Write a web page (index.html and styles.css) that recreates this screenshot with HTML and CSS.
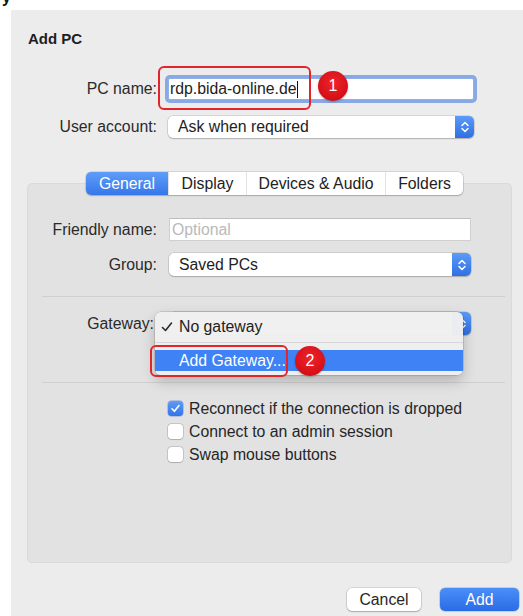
FILE: index.html
```html
<!DOCTYPE html>
<html lang="en">
<head>
<meta charset="utf-8">
<title>Add PC</title>
<link rel="stylesheet" href="styles.css">
</head>
<body>
<div class="page">
  <div class="cut"><span>y</span></div>

  <div class="dialog">
    <h1 class="title">Add PC</h1>

    <div class="form top-form">
      <span class="lbl">PC name:</span>
      <div class="field focus"><span class="val">rdp.bida-online.de</span><i class="caret"></i></div>
      <span class="lbl">User account:</span>
      <div class="popup">
        <span class="val">Ask when required</span>
        <span class="stepper"><svg width="10" height="14" viewBox="0 0 10 14"><path d="M2 5.5 5 2.5 8 5.5M2 8.5 5 11.5 8 8.5" fill="none" stroke="#fff" stroke-width="1.5" stroke-linecap="round" stroke-linejoin="round"/></svg></span>
      </div>
    </div>

    <div class="tabs">
      <span class="tab active t-general">General</span>
      <span class="tab t-display">Display</span>
      <span class="tab t-devices">Devices &amp; Audio</span>
      <span class="tab t-folders">Folders</span>
    </div>

    <div class="panel">
      <div class="form panel-form">
        <span class="lbl">Friendly name:</span>
        <div class="field"><span class="val placeholder">Optional</span></div>
        <span class="lbl">Group:</span>
        <div class="popup">
          <span class="val">Saved PCs</span>
          <span class="stepper"><svg width="10" height="14" viewBox="0 0 10 14"><path d="M2 5.5 5 2.5 8 5.5M2 8.5 5 11.5 8 8.5" fill="none" stroke="#fff" stroke-width="1.5" stroke-linecap="round" stroke-linejoin="round"/></svg></span>
        </div>
      </div>

      <div class="sep sep-a"></div>

      <div class="form panel-form gw-form">
        <span class="lbl">Gateway:</span>
        <div class="popup gw-popup">
          <span class="val"></span>
          <span class="stepper"><svg width="10" height="14" viewBox="0 0 10 14"><path d="M2 5.5 5 2.5 8 5.5M2 8.5 5 11.5 8 8.5" fill="none" stroke="#fff" stroke-width="1.5" stroke-linecap="round" stroke-linejoin="round"/></svg></span>

          <div class="menu">
            <div class="menu-item">
              <svg class="tick" width="12" height="12" viewBox="0 0 12 12"><path d="M1.5 6.5 4.5 9.5 10.5 2" fill="none" stroke="#2b2b2b" stroke-width="1.6" stroke-linecap="round" stroke-linejoin="round"/></svg>
              <span>No gateway</span>
            </div>
            <div class="menu-sep"></div>
            <div class="menu-item hl"><span>Add Gateway...</span></div>
          </div>
        </div>
      </div>

      <div class="sep sep-b"></div>

      <div class="checks">
        <label class="check"><span class="box on"><svg width="11" height="11" viewBox="0 0 11 11"><path d="M2 5.8 4.4 8.3 9 2.6" fill="none" stroke="#fff" stroke-width="1.6" stroke-linecap="round" stroke-linejoin="round"/></svg></span>Reconnect if the connection is dropped</label>
        <label class="check"><span class="box"></span>Connect to an admin session</label>
        <label class="check"><span class="box"></span>Swap mouse buttons</label>
      </div>
    </div>

    <div class="buttons">
      <span class="btn cancel">Cancel</span>
      <span class="btn add">Add</span>
    </div>
  </div>

  <div class="mark mark-1"></div>
  <div class="badge badge-1">1</div>
  <div class="mark mark-2"></div>
  <div class="badge badge-2">2</div>
</div>
</body>
</html>
```

FILE: styles.css
```css
* { box-sizing: border-box; }

html, body {
  margin: 0;
  background: #ffffff;
}

body {
  font-family: "Liberation Sans", Arial, Helvetica, sans-serif;
  font-size: 15.8px;
  color: #262626;
}

.page {
  position: relative;
  width: 523px;
  height: 616px;
  overflow: hidden;
}

/* tail of the line above the sheet */
.cut {
  height: 10px;
  overflow: hidden;
  padding-left: 2px;
  display: flex;
  align-items: flex-end;
}
.cut span {
  display: inline-block;
  font-size: 16px;
  line-height: 16px;
  padding-bottom: 4px;
  color: #111;
  font-weight: bold;
}

.dialog {
  margin-left: 11px;
  height: 606px;
  background: #ececec;
  display: flex;
  flex-direction: column;
  padding-top: 20px;
}

.title {
  margin: 0 0 0 17px;
  font-size: 15px;
  line-height: 18px;
  font-weight: bold;
  color: #1e1e1e;
}

/* label / control grid */
.form {
  display: grid;
  align-items: center;
}
.top-form {
  margin-top: 30px;
  grid-template-columns: 146px 306px;
  column-gap: 11px;
  row-gap: 16px;
  grid-auto-rows: 22px;
}
.lbl {
  text-align: right;
  line-height: 22px;
  white-space: nowrap;
  color: #2a2a2a;
}

.field {
  height: 22px;
  background: #fff;
  border: 1px solid #cfcfcf;
  border-top-color: #bdbdbd;
  display: flex;
  align-items: center;
  padding-left: 2px;
  line-height: 20px;
}
.field.focus {
  border-color: #8fb0e8;
  box-shadow: 0 0 0 3px #88a9e3;
  border-radius: 2px;
  padding-left: 1px;
}
.val { white-space: nowrap; color: #222; }
.placeholder { color: #b9b9b9; }
.caret {
  display: inline-block;
  width: 1px;
  height: 17px;
  background: #111;
  margin-left: 1px;
}

.popup {
  height: 22px;
  background: #fff;
  border-radius: 5px;
  box-shadow: 0 0 0 0.5px rgba(0,0,0,0.18), 0 1px 1.5px rgba(0,0,0,0.18);
  display: flex;
  align-items: center;
  justify-content: space-between;
  padding-left: 10px;
  line-height: 22px;
}
.stepper {
  width: 19px;
  height: 100%;
  border-radius: 0 5px 5px 0;
  background: linear-gradient(#5b9bf8, #2f6fe3);
  display: flex;
  align-items: center;
  justify-content: center;
}

/* segmented tab control */
.tabs {
  position: relative;
  z-index: 1;
  margin: 34px 0 0 75px;
  width: 377px;
  height: 23px;
  display: flex;
  background: #fff;
  border-radius: 5px;
  box-shadow: 0 0 0 0.5px rgba(0,0,0,0.2), 0 1px 1.5px rgba(0,0,0,0.18);
  line-height: 23px;
}
.tab {
  text-align: center;
  color: #222;
  border-left: 1px solid #e2e2e2;
}
.tab:first-child { border-left: 0; }
.tab.active {
  background: linear-gradient(#5f9df8, #3577ea);
  color: #fff;
  border-radius: 5px 0 0 5px;
}
.t-general { width: 82px; }
.t-display { width: 78px; }
.t-devices { width: 139px; }
.t-folders { width: 78px; }

/* grouped box */
.panel {
  margin: -12px 11px 0 16px;
  height: 380px;
  background: #e2e2e2;
  border: 1px solid #dadada;
  border-radius: 5px;
  padding-top: 34px;
}
.panel-form {
  grid-template-columns: 129px 302px;
  column-gap: 12px;
  row-gap: 12px;
  grid-auto-rows: 23px;
}
.panel-form .field,
.panel-form .popup { height: 23px; }

.sep {
  height: 1px;
  background: #d0d0d0;
  margin: 0 6px 0 14px;
}
.sep-a { margin-top: 20px; }
.sep-b { margin-top: 47px; }
.gw-form { margin-top: 15px; }
.gw-form .lbl { margin-right: 3px; }

.gw-popup { position: relative; }

/* opened pop-up menu */
.menu {
  position: absolute;
  left: -14px;
  top: 0;
  width: 308px;
  height: 63px;
  background: rgba(240,240,240,0.97);
  border-radius: 6px;
  box-shadow: 0 0 0 0.5px rgba(0,0,0,0.22), 0 6px 14px rgba(0,0,0,0.22);
  padding-top: 3px;
}
.menu-item {
  height: 24px;
  line-height: 24px;
  padding-left: 24px;
  position: relative;
  color: #222;
}
.menu-item .tick {
  position: absolute;
  left: 6px;
  top: 6px;
}
.menu-sep {
  height: 1px;
  background: #d6d6d6;
  margin: 3px 0 7px;
}
.menu-item.hl {
  height: 21px;
  line-height: 21px;
  background: #3e82f5;
  color: #fff;
}

/* check boxes */
.checks {
  margin: 14px 0 0 140px;
  display: flex;
  flex-direction: column;
}
.check {
  height: 23px;
  line-height: 23px;
  display: flex;
  align-items: center;
  white-space: nowrap;
  color: #262626;
}
.box {
  width: 15px;
  height: 15px;
  border-radius: 3.5px;
  background: #fff;
  box-shadow: 0 0 0 0.5px rgba(0,0,0,0.25), 0 1px 1px rgba(0,0,0,0.12);
  margin-right: 6px;
  display: flex;
  align-items: center;
  justify-content: center;
}
.box.on {
  background: linear-gradient(#5e9cf8, #3274e6);
  box-shadow: 0 0 0 0.5px rgba(40,90,200,0.5);
}

/* dialog buttons */
.buttons {
  margin-top: 25px;
  padding-right: 4px;
  display: flex;
  justify-content: flex-end;
  gap: 19px;
}
.btn {
  height: 23px;
  line-height: 23px;
  text-align: center;
  border-radius: 5px;
}
.cancel {
  width: 74px;
  background: #fff;
  color: #262626;
  box-shadow: 0 0 0 0.5px rgba(0,0,0,0.2), 0 1px 1.5px rgba(0,0,0,0.2);
}
.add {
  width: 79px;
  background: linear-gradient(#4a8ff9, #2b6be4);
  color: #fff;
  box-shadow: 0 0 0 0.5px rgba(30,80,200,0.4);
}

/* red call-out marks */
.mark {
  position: absolute;
  border: 2px solid #e2252d;
  border-radius: 6px;
}
.mark-1 { left: 158px; top: 66px; width: 153px; height: 44px; }
.mark-2 { left: 150px; top: 345px; width: 138px; height: 32px; }

.badge {
  position: absolute;
  width: 30px;
  height: 30px;
  border-radius: 50%;
  background: radial-gradient(circle at 50% 40%, #f0242b, #d50f17 70%, #b80c12);
  color: #fff;
  font-size: 16px;
  line-height: 30px;
  text-align: center;
  box-shadow: 0 1px 2px rgba(0,0,0,0.25);
}
.badge-1 { left: 318px; top: 71px; }
.badge-2 { left: 295px; top: 346px; }
```
